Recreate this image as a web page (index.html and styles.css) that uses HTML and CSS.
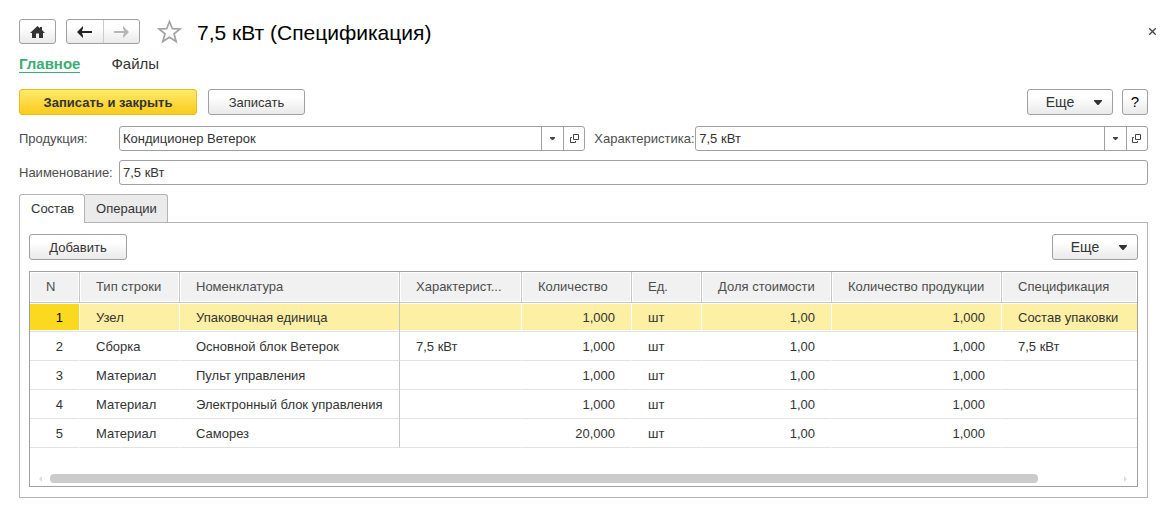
FILE: index.html
```html
<!DOCTYPE html>
<html lang="ru">
<head>
<meta charset="utf-8">
<meta name="viewport" content="width=device-width, initial-scale=1">
<title>7,5 кВт (Спецификация)</title>
<link rel="stylesheet" href="styles.css">
</head>
<body>
<main class="window">
  <header class="titlebar">
    <button class="btn home" type="button" aria-label="Домой">
      <svg width="15" height="12" viewBox="0 0 15 12"><path d="M7.500 0 10 2.200V1h2v3l3 3H13v5H9V7.500H6V12H2V7H0Z" fill="#333"/></svg>
    </button>
    <div class="history">
      <button type="button" aria-label="Назад">
        <svg width="15" height="12" viewBox="0 0 15 12"><path d="M0 6 6 0V2L5 5H15V7H5L6 10V12Z" fill="#222"/></svg>
      </button>
      <button type="button" aria-label="Вперед" disabled>
        <svg width="15" height="12" viewBox="0 0 15 12"><path d="M15 6 9 0V2L10 5H0V7H10L9 10V12Z" fill="#b5b5b5"/></svg>
      </button>
    </div>
    <button class="star" type="button" aria-label="В избранное">
      <svg width="25" height="25" viewBox="0 0 25 25"><path d="M12.500 2.500 15.300 9.700 23 10 17 14.800 19.200 22.500 12.500 18.200 5.800 22.500 8 14.800 2 10 9.700 9.700Z" fill="#fff" stroke="#a3a3a3" stroke-width="1.700"/></svg>
    </button>
    <h1 class="title">7,5 кВт (Спецификация)</h1>
    <button class="close" type="button" aria-label="Закрыть">
      <svg width="7" height="7" viewBox="0 0 7 7"><path d="M0.300.300 6.700 6.700M6.700.300.300 6.700" stroke="#444" stroke-width="1.300"/></svg>
    </button>
  </header>

  <nav class="sections">
    <a class="section current" href="#main">Главное</a>
    <a class="section" href="#files">Файлы</a>
  </nav>

  <div class="commands">
    <button class="btn text primary" type="button">Записать и закрыть</button>
    <button class="btn text save" type="button">Записать</button>
    <button class="btn more push" type="button">Еще <svg width="8" height="5" viewBox="0 0 8 5"><path d="M0 0H8V1L4.500 5H3.500L0 1Z" fill="#333"/></svg></button>
    <button class="btn help" type="button">?</button>
  </div>

  <form class="fields">
    <label for="product">Продукция:</label>
    <div class="field">
      <input id="product" type="text" value="Кондиционер Ветерок">
      <button type="button" aria-label="Выбрать"><svg width="5" height="3" viewBox="0 0 5 3"><path d="M0 0H5V1L3 3H2L0 1Z" fill="#444"/></svg></button>
      <button type="button" aria-label="Открыть"><svg width="9" height="9" viewBox="0 0 9 9"><path d="M3.500.500H8.500V5.500H3.500ZM2 3.500H.500V8.500H5.500V7" fill="none" stroke="#444"/></svg></button>
    </div>
    <label class="second" for="feature">Характеристика:</label>
    <div class="field">
      <input id="feature" type="text" value="7,5 кВт">
      <button type="button" aria-label="Выбрать"><svg width="5" height="3" viewBox="0 0 5 3"><path d="M0 0H5V1L3 3H2L0 1Z" fill="#444"/></svg></button>
      <button type="button" aria-label="Открыть"><svg width="9" height="9" viewBox="0 0 9 9"><path d="M3.500.500H8.500V5.500H3.500ZM2 3.500H.500V8.500H5.500V7" fill="none" stroke="#444"/></svg></button>
    </div>
    <label for="name">Наименование:</label>
    <div class="field wide">
      <input id="name" type="text" value="7,5 кВт">
    </div>
  </form>

  <div class="tabs" role="tablist">
    <button class="tab active" type="button" role="tab" aria-selected="true">Состав</button>
    <button class="tab" type="button" role="tab" aria-selected="false">Операции</button>
  </div>

  <section class="panel">
    <div class="panel-commands">
      <button class="btn text add" type="button">Добавить</button>
      <button class="btn more push" type="button">Еще <svg width="8" height="5" viewBox="0 0 8 5"><path d="M0 0H8V1L4.500 5H3.500L0 1Z" fill="#333"/></svg></button>
    </div>
    <div class="grid">
      <table class="items">
        <colgroup>
          <col class="c-n"><col class="c-type"><col class="c-item"><col class="c-feature"><col class="c-qty"><col class="c-unit"><col class="c-share"><col class="c-output"><col>
        </colgroup>
        <thead>
          <tr><th>N</th><th>Тип строки</th><th class="fixed">Номенклатура</th><th>Характерист...</th><th>Количество</th><th>Ед.</th><th>Доля стоимости</th><th>Количество продукции</th><th>Спецификация</th></tr>
        </thead>
        <tbody>
          <tr class="selected"><td class="num">1</td><td>Узел</td><td class="fixed">Упаковочная единица</td><td></td><td class="num">1,000</td><td>шт</td><td class="num">1,00</td><td class="num">1,000</td><td>Состав упаковки</td></tr>
          <tr><td class="num">2</td><td>Сборка</td><td class="fixed">Основной блок Ветерок</td><td>7,5 кВт</td><td class="num">1,000</td><td>шт</td><td class="num">1,00</td><td class="num">1,000</td><td>7,5 кВт</td></tr>
          <tr><td class="num">3</td><td>Материал</td><td class="fixed">Пульт управления</td><td></td><td class="num">1,000</td><td>шт</td><td class="num">1,00</td><td class="num">1,000</td><td></td></tr>
          <tr><td class="num">4</td><td>Материал</td><td class="fixed">Электронный блок управления</td><td></td><td class="num">1,000</td><td>шт</td><td class="num">1,00</td><td class="num">1,000</td><td></td></tr>
          <tr><td class="num">5</td><td>Материал</td><td class="fixed">Саморез</td><td></td><td class="num">20,000</td><td>шт</td><td class="num">1,00</td><td class="num">1,000</td><td></td></tr>
        </tbody>
      </table>
      <div class="scroll">
        <svg width="3" height="6" viewBox="0 0 3 6"><path d="M3 0V6L0 3Z" fill="#ddd"/></svg>
        <div class="track"><div class="thumb"></div></div>
        <svg width="3" height="6" viewBox="0 0 3 6"><path d="M0 0V6L3 3Z" fill="#ddd"/></svg>
      </div>
    </div>
  </section>
</main>
</body>
</html>
```
FILE: styles.css
```css
* {
  box-sizing: border-box;
}

body {
  margin: 0;
  background: #fff;
  color: #333;
  font: 13px/16px "Liberation Sans", Arial, sans-serif;
}

button,
input {
  margin: 0;
  padding: 0;
  border: 0;
  background: none;
  color: inherit;
  font: inherit;
}

svg {
  display: block;
}

.window {
  padding: 19px 26px 14px 19px;
}

.btn,
.history {
  display: flex;
  align-items: center;
  justify-content: center;
  height: 26px;
  border: 1px solid #a0a0a0;
  border-radius: 3px;
  background: linear-gradient(#fff 30%, #e9e9e9);
}

.text {
  padding-top: 2px;
}

.push {
  margin-left: auto;
}

/* Title bar */
.titlebar {
  display: flex;
  align-items: center;
  height: 25px;
}

.home {
  width: 37px;
  height: 25px;
  margin-right: 10px;
}

.history {
  width: 74px;
  height: 25px;
}

.history button {
  display: flex;
  flex: 1;
  align-items: center;
  justify-content: center;
  height: 100%;
}

.history button + button {
  border-left: 1px solid #ccc;
}

.star {
  margin-left: 17px;
}

.title {
  margin: 2px 0 0 15px;
  color: #000;
  font-size: 21px;
  font-weight: 400;
  line-height: 24px;
}

.close {
  margin: 0 -10px 0 auto;
  padding-right: 2px;
}

/* Section links */
.sections {
  display: flex;
  gap: 31px;
  margin-top: 12px;
  font-size: 15px;
  line-height: 16px;
}

.section {
  color: #333;
  text-decoration: none;
}

.section.current {
  border-bottom: 1px solid #3aae74;
  color: #3aae74;
  font-weight: 700;
}

/* Form commands */
.commands {
  display: flex;
  margin-top: 16px;
}

.primary {
  width: 178px;
  border-color: #f2b91f;
  background: linear-gradient(#feea6a, #fbcb1c);
  font-weight: 700;
}

.save {
  width: 97px;
  margin-left: 11px;
}

.more {
  gap: 20px;
  width: 86px;
  padding-left: 8px;
  font-size: 14px;
}

.help {
  width: 26px;
  margin-left: 9px;
  color: #000;
  font-size: 15px;
}

/* Fields */
.fields {
  display: grid;
  grid-template-columns: 100px 103fr 110px 100fr;
  row-gap: 9px;
  align-items: center;
  margin-top: 11px;
}

.fields label {
  color: #4d4d4d;
}

.fields .second {
  padding-left: 9px;
}

.field {
  display: flex;
  height: 25px;
  border: 1px solid #a0a0a0;
  border-radius: 3px;
}

.field.wide {
  grid-column: 2 / -1;
}

.field input {
  flex: 1;
  min-width: 0;
  padding: 0 3px;
  outline: 0;
}

.field button {
  display: flex;
  align-items: center;
  justify-content: center;
  width: 22px;
  border-left: 1px solid #a0a0a0;
}

.field button:last-child {
  width: 21px;
}

/* Tabs */
.tabs {
  position: relative;
  display: flex;
  margin-top: 9px;
}

.tab {
  height: 28px;
  padding: 0 10px 0 11px;
  border: 1px solid #b3b3b3;
  border-bottom: 0;
  border-left: 0;
  border-radius: 0 3px 0 0;
  background: #ebebeb;
}

.tab.active {
  height: 29px;
  margin-bottom: -1px;
  border-left: 1px solid #b3b3b3;
  border-radius: 3px 3px 0 0;
  background: #fff;
}

.panel {
  padding: 11px 9px 10px;
  border: 1px solid #b3b3b3;
}

.panel-commands {
  display: flex;
}

.add {
  width: 98px;
}

/* Items table */
.grid {
  margin-top: 11px;
  border: 1px solid #a0a0a0;
}

.items {
  width: 100%;
  border-spacing: 0;
  table-layout: fixed;
}

.c-n { width: 50px; }
.c-type { width: 100px; }
.c-item { width: 220px; }
.c-feature { width: 122px; }
.c-qty { width: 110px; }
.c-unit { width: 70px; }
.c-share { width: 130px; }
.c-output { width: 170px; }

.items th,
.items td {
  height: 29px;
  padding: 2px 15px 0 16px;
  overflow: hidden;
  border-right: 1px solid #fff;
  border-bottom: 1px solid #e2e2e2;
  text-align: left;
  white-space: nowrap;
}

.items th {
  height: 31px;
  padding-top: 0;
  border-right-color: #c6c6c6;
  border-bottom-color: #c6c6c6;
  background: #f1f1f1;
  box-shadow: inset 0 0 0 1px #fff;
  color: #4d4d4d;
  font-weight: 400;
}

.items .num {
  padding-right: 16px;
  padding-left: 0;
  text-align: right;
}

.items th.fixed,
.items td.fixed {
  border-right-color: #c6c6c6;
}

.items th:last-child,
.items td:last-child {
  border-right: 0;
}

.items .selected td {
  background: #fdf0a5;
  box-shadow: inset 0 1px #fff, inset 0 -1px #fff;
}

.items .selected td:first-child {
  background: #fbd91f;
  color: #000;
}

.scroll {
  display: flex;
  align-items: center;
  gap: 8px;
  margin-top: 26px;
  padding: 0 10px 3px 9px;
}

.track {
  flex: 1;
}

.thumb {
  width: 92.7%;
  height: 9px;
  border-radius: 4px;
  background: #cbcbcb;
}
```
